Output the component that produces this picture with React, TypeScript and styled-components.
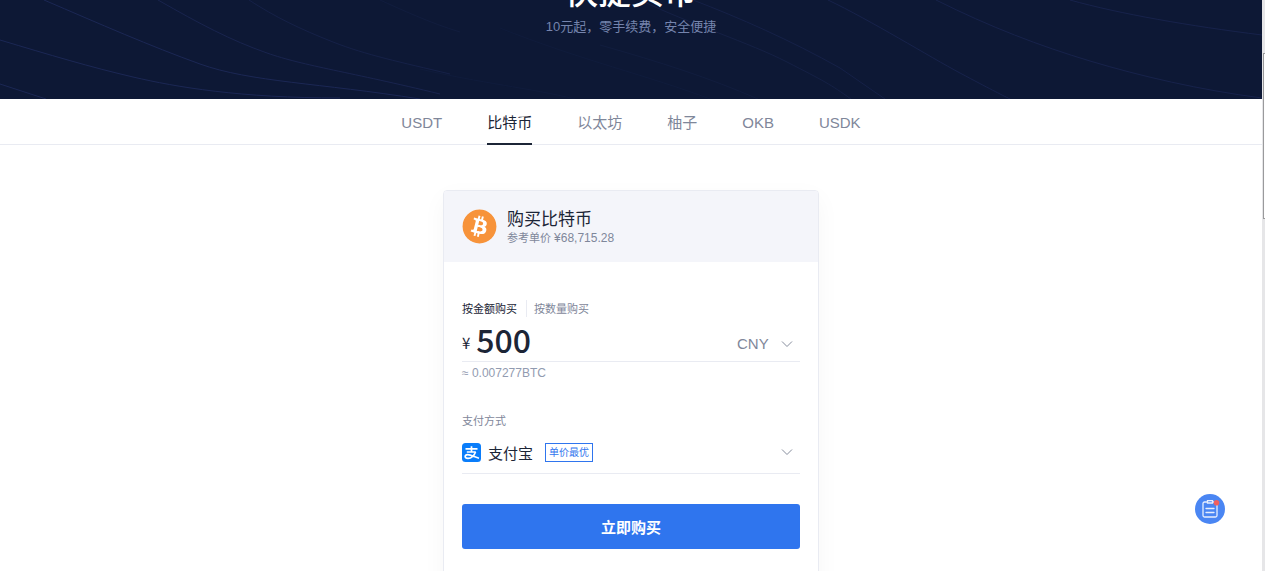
import React, { useState } from "react";
import styled, { createGlobalStyle } from "styled-components";
import { FaBitcoin } from "react-icons/fa";

const GlobalStyle = createGlobalStyle`
  * { box-sizing: border-box; }
  body {
    margin: 0;
    background: #fff;
    color: #1c2536;
    font-family: "Liberation Sans", "Noto Sans CJK SC", sans-serif;
    overflow: hidden;
  }
  button, input, select { font-family: inherit; margin: 0; }
`;

const muted = "#7f879a";
const line = "#e9ebf2";

const Window = styled.div`
  display: flex;
  height: 100vh;
  overflow: hidden;
`;

const Page = styled.div`
  flex: 1;
  min-width: 0;
`;

const ScrollTrack = styled.div`
  width: 3px;
  padding-top: 53px;
  background: #e6e6e8;
`;

const ScrollThumb = styled.div`
  height: 166px;
  margin-left: 1px;
  border: 1px solid #9a9a9c;
  border-right: 0;
  background: #fdfdfd;
`;

const Hero = styled.header`
  position: relative;
  display: flex;
  flex-direction: column;
  justify-content: flex-end;
  align-items: center;
  height: 99px;
  padding-bottom: 62px;
  overflow: hidden;
  background: #0d1835;
`;

const Waves = styled.svg`
  position: absolute;
  inset: 0;
  width: 100%;
  height: 100%;
`;

const HeroTitle = styled.h1`
  position: relative;
  flex: none;
  margin: 0;
  color: #fff;
  font-size: 33px;
  line-height: 40px;
  font-weight: 500;
`;

const HeroText = styled.p`
  position: relative;
  flex: none;
  margin: 4px 0 0;
  color: #7584ad;
  font-size: 13px;
  line-height: 20px;
`;

const Tabs = styled.nav`
  display: flex;
  justify-content: center;
  gap: 45px;
  height: 46px;
  border-bottom: 1px solid ${line};
`;

const Tab = styled.a<{ $active?: boolean }>`
  height: 46px;
  border-bottom: 2px solid ${(p) => (p.$active ? "#1c2536" : "transparent")};
  color: ${(p) => (p.$active ? "#1c2536" : muted)};
  font-size: 15px;
  line-height: 48px;
  text-decoration: none;
`;

const Card = styled.main`
  width: 376px;
  margin: 45px auto 0;
  border: 1px solid ${line};
  border-radius: 4px;
  box-shadow: 0 8px 24px rgba(28, 37, 54, 0.04);
  overflow: hidden;
`;

const CardHeader = styled.div`
  display: flex;
  align-items: center;
  gap: 10px;
  height: 71px;
  padding: 0 18px;
  background: #f4f5fa;
`;

const CoinIcon = styled(FaBitcoin)`
  width: 35px;
  height: 35px;
  border-radius: 50%;
  background: radial-gradient(#fff 60%, transparent 62%);
  color: #f7933a;
`;

const CardText = styled.div`
  padding-top: 2px;
`;

const CardTitle = styled.h2`
  margin: 0;
  font-size: 17px;
  line-height: 20px;
  font-weight: 400;
`;

const Price = styled.p`
  margin: 0;
  color: ${muted};
  font-size: 11px;
  line-height: 16px;
`;

const Figure = styled.span`
  font-size: 12px;
`;

const Form = styled.form`
  padding: 38px 18px;
`;

const Modes = styled.div`
  display: flex;
  align-items: center;
  height: 17px;
`;

const Mode = styled.button<{ $active?: boolean }>`
  padding: 1px 0 0;
  border: 0;
  background: none;
  color: ${(p) => (p.$active ? "#1c2536" : muted)};
  font-size: 11px;
  line-height: 16px;

  & + & {
    margin-left: 9px;
    padding-left: 7px;
    border-left: 1px solid ${line};
  }
`;

const AmountRow = styled.div`
  display: flex;
  align-items: center;
  height: 45px;
  border-bottom: 1px solid ${line};
`;

const Yen = styled.label`
  padding-top: 8px;
  font-family: "Noto Sans CJK SC", sans-serif;
  font-size: 15px;
  line-height: 18px;
`;

const AmountInput = styled.input`
  && { font-family: "Noto Sans CJK SC", sans-serif; }
  flex: 1;
  min-width: 0;
  height: 44px;
  margin-left: 6px;
  padding: 0;
  border: 0;
  outline: 0;
  background: none;
  color: #1c2536;
  font-size: 32px;
  font-weight: 500;
`;

const Currency = styled.div`
  position: relative;
  width: 63px;
  padding-top: 8px;
`;

const CurrencySelect = styled.select`
  width: 100%;
  height: 24px;
  padding: 0;
  border: 0;
  outline: 0;
  background: none;
  appearance: none;
  color: ${muted};
  font-size: 15px;
`;

const Chevron = styled.svg`
  width: 12px;
  height: 8px;
  fill: none;
  stroke: #868d9d;
`;

const SelectChevron = styled(Chevron)`
  position: absolute;
  right: 7px;
  bottom: 7px;
  pointer-events: none;
`;

const Estimate = styled.p`
  margin: 0 0 28px;
  color: #929bb0;
  font-size: 12px;
  line-height: 22px;
`;

const FieldLabel = styled.div`
  color: ${muted};
  font-size: 11px;
  line-height: 18px;
`;

const Payment = styled.button`
  display: flex;
  align-items: center;
  width: 100%;
  height: 44px;
  margin-bottom: 30px;
  padding: 1px 7px 0 0;
  border: 0;
  border-bottom: 1px solid ${line};
  background: none;
  color: #1c2536;
  font-size: 15px;
  text-align: left;
`;

const AlipayIcon = styled.svg`
  width: 19px;
  height: 19px;
  margin-right: 7px;
`;

const Badge = styled.span`
  margin: 0 auto 0 12px;
  padding: 0 3px;
  border: 1px solid #2f75ee;
  color: #2f75ee;
  font-size: 10px;
  line-height: 17px;
`;

const Submit = styled.button`
  width: 100%;
  height: 45px;
  border: 0;
  border-radius: 3px;
  background: #2f75ee;
  color: #fff;
  font-size: 15px;
  font-weight: 700;
`;

const Orders = styled.button`
  position: fixed;
  right: 40px;
  bottom: 47px;
  width: 30px;
  height: 30px;
  padding: 0;
  border: 0;
  border-radius: 50%;
  background: #4a86f3;

  svg { display: block; }
`;

const waves = [
  { d: "M44 0C100 24 150 46 200 64S320 83 420 99", o: 1 },
  { d: "M0 40C50 55 90 67 133 77S240 98 340 98", o: 1 },
  { d: "M0 84L46 99", o: 1 },
  { d: "M158 0C200 24 230 40 267 53S350 72 440 94", o: 0.8 },
  { d: "M249 0C275 17 300 29 333 42S400 62 450 74", o: 0.6 },
  { d: "M380 0C400 9 430 23 460 32", o: 0.3 },
  { d: "M420 69C480 83 530 88 575 99", o: 0.2 },
  { d: "M500 28C580 60 650 76 710 99", o: 0.2 },
  { d: "M600 45C660 62 710 78 758 99", o: 0.3 },
  { d: "M640 0C690 24 750 43 787 62S830 84 851 99", o: 0.5 },
  { d: "M693 0C740 18 790 40 840 68L885 99", o: 0.6 },
  { d: "M828 0C870 20 930 57 960 73S1000 94 1010 99", o: 0.7 },
  { d: "M936 0C990 27 1040 46 1090 61S1200 90 1262 98", o: 0.7 },
  { d: "M1070 0C1120 14 1190 26 1262 35", o: 0.7 },
];

const tabs = ["USDT", "比特币", "以太坊", "柚子", "OKB", "USDK"];

export default function App() {
  const [amount, setAmount] = useState("500");
  return (
    <>
      <GlobalStyle />
      <Window>
        <Page>
          <Hero>
            <Waves viewBox="0 0 1262 99" preserveAspectRatio="none" aria-hidden="true">
              {waves.map((w) => (
                <path key={w.d} d={w.d} fill="none" stroke="#1b2754" strokeOpacity={w.o} />
              ))}
            </Waves>
            <HeroTitle>快捷买币</HeroTitle>
            <HeroText>10元起，零手续费，安全便捷</HeroText>
          </Hero>
          <Tabs>
            {tabs.map((t) => (
              <Tab key={t} href="#" $active={t === "比特币"}>{t}</Tab>
            ))}
          </Tabs>
          <Card>
            <CardHeader>
              <CoinIcon aria-hidden="true" />
              <CardText>
                <CardTitle>购买比特币</CardTitle>
                <Price>参考单价 <Figure>¥68,715.28</Figure></Price>
              </CardText>
            </CardHeader>
            <Form onSubmit={(e) => e.preventDefault()}>
              <Modes>
                <Mode type="button" $active>按金额购买</Mode>
                <Mode type="button">按数量购买</Mode>
              </Modes>
              <AmountRow>
                <Yen htmlFor="amount">¥</Yen>
                <AmountInput id="amount" value={amount} onChange={(e) => setAmount(e.target.value)} />
                <Currency>
                  <CurrencySelect aria-label="CNY">
                    <option>CNY</option>
                  </CurrencySelect>
                  <SelectChevron viewBox="0 0 12 8" aria-hidden="true">
                    <path d="M1 1.5L6 6.5L11 1.5" />
                  </SelectChevron>
                </Currency>
              </AmountRow>
              <Estimate>≈ 0.007277BTC</Estimate>
              <FieldLabel id="payment-label">支付方式</FieldLabel>
              <Payment type="button" aria-haspopup="listbox" aria-describedby="payment-label">
                <AlipayIcon viewBox="0 0 19 19" aria-hidden="true">
                  <rect width="19" height="19" rx="3.500" fill="#0a7dfa" />
                  <g fill="none" stroke="#fff" strokeWidth="1.700">
                    <path d="M3.500 5.800H15.500M9.500 3.300V8.800M4.800 9H13.800" />
                    <path d="M13.500 9C12.300 12.300 9.500 15.300 6 15.300C2.300 15.300 2.300 11.700 5.600 11.700C9 11.700 13 14.300 17 15.300" />
                  </g>
                </AlipayIcon>
                支付宝
                <Badge>单价最优</Badge>
                <Chevron viewBox="0 0 12 8" aria-hidden="true">
                  <path d="M1 1.5L6 6.5L11 1.5" />
                </Chevron>
              </Payment>
              <Submit type="submit">立即购买</Submit>
            </Form>
          </Card>
        </Page>
        <ScrollTrack>
          <ScrollThumb />
        </ScrollTrack>
      </Window>
      <Orders type="button" aria-label="订单">
        <svg width="30" height="30" viewBox="0 0 30 30" fill="none" stroke="#e6eefe" strokeWidth="1.3" aria-hidden="true">
          <path d="M12 8H9.5A1.5 1.5 0 0 0 8 9.500V21.500A1.500 1.500 0 0 0 9.500 23H20.500A1.500 1.500 0 0 0 22 21.500V9.500A1.500 1.500 0 0 0 20.500 8H18" />
          <path d="M12.500 6.700H17.500V9H12.500Z" />
          <path d="M11 14.500H19M11 18.500H19" strokeLinecap="round" />
          <circle cx="21.500" cy="8.800" r="2.800" fill="#f0605f" stroke="none" />
        </svg>
      </Orders>
    </>
  );
}
